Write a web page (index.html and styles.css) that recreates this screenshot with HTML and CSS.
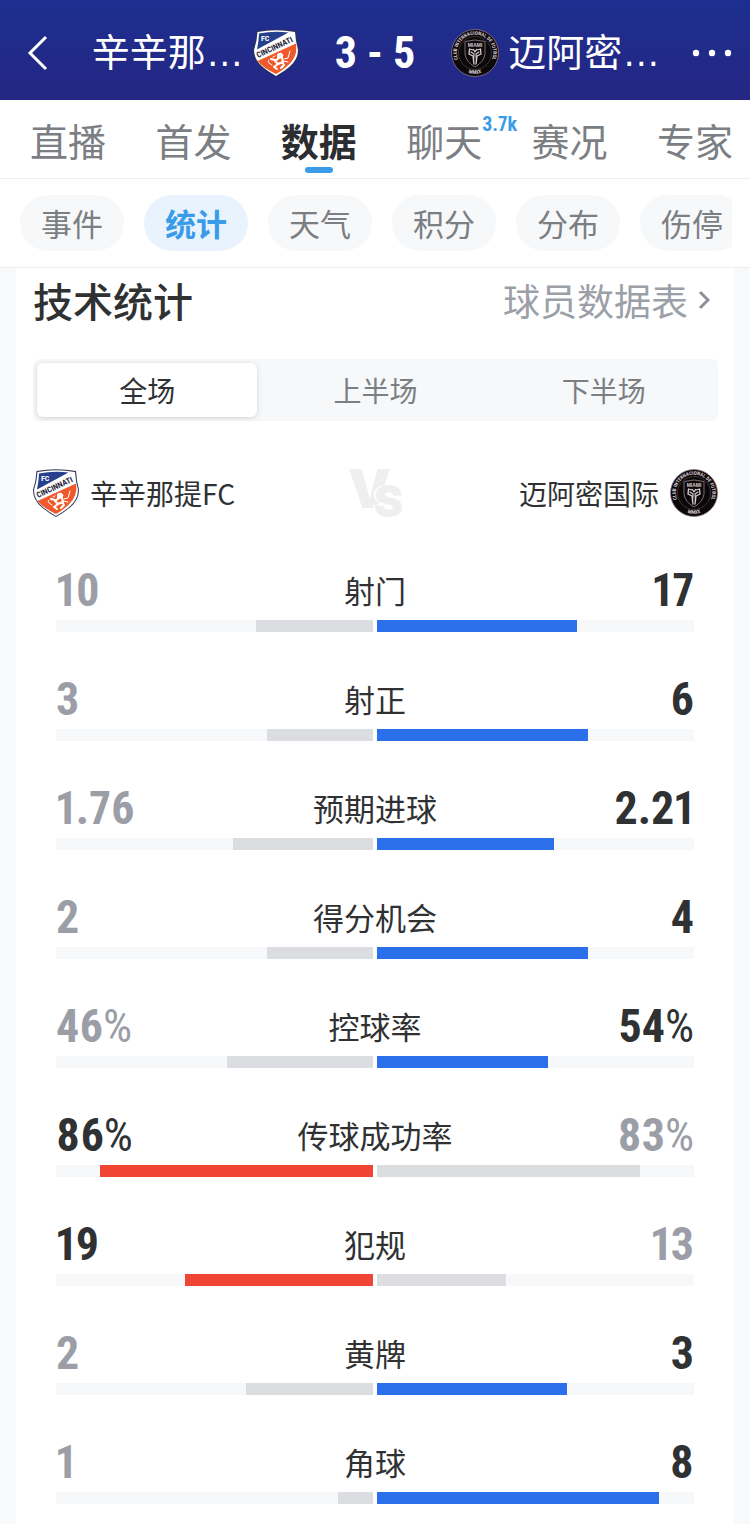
FILE: index.html
```html
<!DOCTYPE html>
<html lang="zh-CN">
<head>
<meta charset="utf-8">
<meta name="viewport" content="width=device-width, initial-scale=1">
<title>技术统计</title>
<link rel="stylesheet" href="styles.css">
</head>
<body>
<header class="match-bar">
  <button class="icon-button" type="button" aria-label="返回">
    <svg class="back-icon" viewBox="0 0 20 36"><path d="M18 2L2 18L18 34"/></svg>
  </button>
  <div class="side side-home">
    <span class="side-name">辛辛那…</span>
    <svg class="crest crest-shield" viewBox="0 0 46 48" role="img" aria-label="辛辛那提FC">
      <g id="cincinnati">
        <path d="M3.500 2Q23-1.500 43 2Q43.500 12 46 21Q46 31 37 38.500Q31 43.500 23 48Q15 43.500 9 38.500Q0 31 0 21Q3 12 3.500 2Z" fill="#2b3350"/>
        <path d="M4.500 3Q23-.5 42 3Q42.500 12 45 21Q45 30.500 36.500 37.700Q31 42.500 23 46.900Q15 42.500 9.500 37.700Q1 30.500 1 21Q4 12 4.500 3Z" fill="#fff"/>
        <path d="M6 4.500Q21 1.500 35.500 3.500L4 20.500Q5.800 12 6 4.500Z" fill="#263f8f"/>
        <path d="M43 14.500L4.500 32Q10 38.800 23 45Q42.500 34 43.300 21Z" fill="#f0592b"/>
        <text x="8" y="12" class="crest-fc">FC</text>
        <text transform="translate(5 29) rotate(-25)" class="crest-name">CINCINNATI</text>
        <g fill="none" stroke="#fff" stroke-linecap="round" stroke-linejoin="round">
          <path d="M25 25L28 24L30 26L29 29L25 29Z" fill="#fff" stroke-width="1"/>
          <path d="M26 29L22 32L25 35L30 33L29 29M22 31L18 30M25 35L21 38L24 40M29 33L31 36L28 39" stroke-width="2"/>
          <path d="M19 36L16 34Q14 32 16 31M31 30L35 29L37 22M30 32L35 33M22 27L20 28" stroke-width="1"/>
        </g>
      </g>
    </svg>
  </div>
  <h1 class="score">3 - 5</h1>
  <div class="side">
    <svg class="crest" viewBox="0 0 48 48" role="img" aria-label="迈阿密国际">
      <g id="miami">
        <circle cx="24" cy="24" r="23.500" fill="#0b0809" stroke="#8b7684" stroke-width=".8"/>
        <circle cx="24" cy="24" r="16.500" fill="none" stroke="#5d4b52" stroke-width=".6"/>
        <path id="ring" d="M9.700 35.200A18.200 18.200 0 1 1 38.300 35.200" fill="none"/>
        <path id="ring-low" d="M14 42.300A20.800 20.800 0 0 0 34 42.300" fill="none"/>
        <text class="ring-text"><textPath href="#ring" startOffset="50%" text-anchor="middle">CLUB INTERNACIONAL DE FUTBOL</textPath></text>
        <text class="ring-text"><textPath href="#ring-low" startOffset="50%" text-anchor="middle">MMXX</textPath></text>
        <path d="M14 12.500Q24 9.500 34 12.500V25Q33 33 24 38Q15 33 14 25Z" fill="#0b0809" stroke="#9b858b" stroke-width=".8"/>
        <text x="24" y="17.500" text-anchor="middle" class="miami-text">MIAMI</text>
        <g fill="none" stroke="#dcced3" stroke-linecap="round" stroke-linejoin="round">
          <path d="M22 21L18.500 20L18 25L22 27L23 35M26 21L29.500 20L30 25L26 27L25 35" stroke-width="1.300"/>
          <path d="M20 23L23 25L22.500 32M28 23L25 25L25.500 32M22.500 20.500L24 23L25.500 20.500" stroke-width="1.200"/>
        </g>
      </g>
    </svg>
    <span class="side-name">迈阿密…</span>
  </div>
  <button class="icon-button" type="button" aria-label="更多">
    <svg class="more-icon" viewBox="0 0 40 8"><circle cx="4" cy="4" r="3.200"/><circle cx="20" cy="4" r="3.200"/><circle cx="36" cy="4" r="3.200"/></svg>
  </button>
</header>

<nav class="tabs">
  <a class="tab" href="#live">直播</a>
  <a class="tab" href="#lineup">首发</a>
  <a class="tab tab-active" href="#data" aria-current="page">数据</a>
  <a class="tab" href="#chat">聊天<span class="badge">3.7k</span></a>
  <a class="tab" href="#match">赛况</a>
  <a class="tab" href="#expert">专家</a>
</nav>

<nav class="pills">
  <div class="pill-track">
    <a class="pill" href="#events">事件</a>
    <a class="pill pill-active" href="#stats" aria-current="true">统计</a>
    <a class="pill" href="#weather">天气</a>
    <a class="pill" href="#points">积分</a>
    <a class="pill" href="#spread">分布</a>
    <a class="pill" href="#injury">伤停</a>
  </div>
</nav>

<main class="card" id="stats">
  <div class="card-head">
    <h2 class="card-title">技术统计</h2>
    <a class="card-link" href="#players">球员数据表<svg class="chevron" viewBox="0 0 12 20"><path d="M2 2L10 10L2 18"/></svg></a>
  </div>

  <div class="segments">
    <button class="segment segment-active" type="button" aria-pressed="true">全场</button>
    <button class="segment" type="button" aria-pressed="false">上半场</button>
    <button class="segment" type="button" aria-pressed="false">下半场</button>
  </div>

  <div class="teams">
    <div class="team"><svg class="crest crest-shield" viewBox="0 0 46 48" aria-hidden="true"><use href="#cincinnati"/></svg><span>辛辛那提FC</span></div>
    <div class="versus"><span class="versus-v">V</span><span class="versus-s">S</span></div>
    <div class="team team-away"><span>迈阿密国际</span><svg class="crest" viewBox="0 0 48 48" aria-hidden="true"><use href="#miami"/></svg></div>
  </div>

  <ul class="stats">
    <li class="stat"><span class="value">10</span><span class="label">射门</span><span class="value lead">17</span><div class="bar bar-home"><div class="fill" style="width:37%"></div></div><div class="bar"><div class="fill fill-away" style="width:63%"></div></div></li>
    <li class="stat"><span class="value">3</span><span class="label">射正</span><span class="value lead">6</span><div class="bar bar-home"><div class="fill" style="width:33.300%"></div></div><div class="bar"><div class="fill fill-away" style="width:66.700%"></div></div></li>
    <li class="stat"><span class="value">1.76</span><span class="label">预期进球</span><span class="value lead">2.21</span><div class="bar bar-home"><div class="fill" style="width:44.300%"></div></div><div class="bar"><div class="fill fill-away" style="width:55.700%"></div></div></li>
    <li class="stat"><span class="value">2</span><span class="label">得分机会</span><span class="value lead">4</span><div class="bar bar-home"><div class="fill" style="width:33.300%"></div></div><div class="bar"><div class="fill fill-away" style="width:66.700%"></div></div></li>
    <li class="stat"><span class="value">46<span class="percent">%</span></span><span class="label">控球率</span><span class="value lead">54<span class="percent">%</span></span><div class="bar bar-home"><div class="fill" style="width:46%"></div></div><div class="bar"><div class="fill fill-away" style="width:54%"></div></div></li>
    <li class="stat"><span class="value lead">86<span class="percent">%</span></span><span class="label">传球成功率</span><span class="value">83<span class="percent">%</span></span><div class="bar bar-home"><div class="fill fill-home" style="width:86%"></div></div><div class="bar"><div class="fill" style="width:83%"></div></div></li>
    <li class="stat"><span class="value lead">19</span><span class="label">犯规</span><span class="value">13</span><div class="bar bar-home"><div class="fill fill-home" style="width:59.400%"></div></div><div class="bar"><div class="fill" style="width:40.600%"></div></div></li>
    <li class="stat"><span class="value">2</span><span class="label">黄牌</span><span class="value lead">3</span><div class="bar bar-home"><div class="fill" style="width:40%"></div></div><div class="bar"><div class="fill fill-away" style="width:60%"></div></div></li>
    <li class="stat"><span class="value">1</span><span class="label">角球</span><span class="value lead">8</span><div class="bar bar-home"><div class="fill" style="width:11.100%"></div></div><div class="bar"><div class="fill fill-away" style="width:88.900%"></div></div></li>
  </ul>
</main>
</body>
</html>
```
FILE: styles.css
```css
* {
  box-sizing: border-box;
}

body {
  margin: 0;
  min-height: 100vh;
  display: flex;
  flex-direction: column;
  background: #f7f9fb;
  color: #303133;
  font-family: "Noto Sans CJK SC", sans-serif;
}

a {
  color: inherit;
  text-decoration: none;
}

button {
  border: 0;
  padding: 0;
  background: none;
  color: inherit;
  font: inherit;
}

.match-bar {
  height: 100px;
  padding: 6px 18px 0;
  display: grid;
  grid-template-columns: 40px 1fr auto 1fr 40px;
  align-items: center;
  background: linear-gradient(#1d2f90, #252683);
  color: #fff;
}

.icon-button {
  display: flex;
  align-items: center;
  justify-content: center;
}

.back-icon {
  width: 24px;
  height: 36px;
  fill: none;
  stroke: #fff;
  stroke-width: 3;
}

.more-icon {
  width: 40px;
  height: 8px;
  fill: #fff;
}

.side {
  display: flex;
  align-items: center;
  gap: 9px;
}

.side-home {
  justify-content: flex-end;
}

.side-name {
  font-family: "Liberation Sans", "Noto Sans CJK SC", sans-serif;
  font-size: 38px;
  line-height: 48px;
}

.score,
.value,
.badge {
  font-family: "Roboto Condensed", "Liberation Sans Narrow", "DejaVu Sans Condensed", sans-serif;
  font-weight: 700;
  font-variant-numeric: proportional-nums;
}

.score {
  margin: 0;
  padding: 0 36px;
  font-size: 44px;
  line-height: 48px;
}

.crest {
  width: 48px;
  height: 48px;
  flex: none;
}

.crest-shield {
  width: 46px;
}

.crest-fc,
.crest-name,
.ring-text {
  font-family: "Roboto Condensed", "Liberation Sans Narrow", sans-serif;
  font-weight: 700;
  font-size: 8px;
}

.crest-fc {
  fill: #fff;
}

.crest-name {
  fill: #1d2438;
}

.ring-text {
  font-size: 5px;
  fill: #d8c8cf;
}

.miami-text {
  font-family: "Liberation Sans", sans-serif;
  font-weight: 700;
  font-size: 5px;
  fill: #d8c8cf;
}

.tabs {
  height: 79px;
  padding: 2px 17px 0 30px;
  display: flex;
  align-items: center;
  justify-content: space-between;
  background: #fff;
  border-bottom: 1px solid #edeef0;
  color: #7b7e82;
  font-size: 38px;
  line-height: 56px;
}

.tab {
  position: relative;
}

.tab-active {
  color: #2c2d30;
  font-weight: 700;
}

.tab-active::after {
  content: "";
  position: absolute;
  left: 50%;
  bottom: -5px;
  width: 28px;
  height: 6px;
  margin-left: -14px;
  border-radius: 3px;
  background: #3a9ce9;
}

.badge {
  position: absolute;
  left: 100%;
  top: 2px;
  color: #3a9ce9;
  font-size: 20px;
  line-height: 20px;
}

.pills {
  padding: 16px 18px 16px 20px;
  background: #fff;
  border-bottom: 1px solid #edeef0;
}

.pill-track {
  display: flex;
  gap: 20px;
  overflow: hidden;
}

.pill {
  flex: none;
  padding: 0 21px;
  border-radius: 29px;
  background: #f7f8fa;
  color: #7b7e82;
  font-size: 31px;
  line-height: 56px;
}

.pill-active {
  background: #e8f3fe;
  color: #3a9ce9;
  font-weight: 700;
}

.card {
  flex: 1;
  margin: 0 16px;
  padding: 0 16px 20px 17px;
  background: #fff;
}

.card-head {
  display: flex;
  align-items: center;
  justify-content: space-between;
  line-height: 64px;
}

.card-title {
  margin: 0;
  font-size: 40px;
  font-weight: 500;
}

.card-link {
  display: flex;
  align-items: center;
  gap: 10px;
  padding-right: 8px;
  color: #9b9fa7;
  font-size: 37px;
}

.chevron {
  width: 12px;
  height: 20px;
  fill: none;
  stroke: #8c9097;
  stroke-width: 3;
}

.segments {
  margin-top: 27px;
  padding: 4px;
  display: grid;
  grid-template-columns: repeat(3, 1fr);
  gap: 8px;
  border-radius: 6px;
  background: #f6f8fa;
}

.segment {
  border-radius: 6px;
  color: #7b7e82;
  font-size: 28px;
  line-height: 54px;
}

.segment-active {
  background: #fff;
  box-shadow: 0 1px 5px rgba(0, 0, 0, 0.16);
  color: #303133;
}

.teams {
  margin-top: 48px;
  display: grid;
  grid-template-columns: 1fr auto 1fr;
  align-items: center;
  font-size: 28px;
  line-height: 48px;
}

.team {
  display: flex;
  align-items: center;
  gap: 11px;
}

.team-away {
  justify-content: flex-end;
}

.versus {
  height: 48px;
  display: flex;
  color: #efeff0;
  font-family: Inter, sans-serif;
  font-weight: 900;
}

.versus-v {
  font-size: 54px;
  line-height: 40px;
}

.versus-s {
  margin-left: -17px;
  padding-top: 16px;
  font-size: 44px;
  line-height: 32px;
  text-shadow: -2px 0 #fff;
}

.stats {
  margin: 47px 0 0;
  padding: 0 24px 0 23px;
  display: grid;
  gap: 41px;
  list-style: none;
}

.stat {
  display: grid;
  grid-template-columns: repeat(2, 1fr);
  gap: 4px;
}

.value,
.label {
  grid-row: 1;
  line-height: 52px;
}

.value {
  grid-column: 1;
  color: #9b9ea7;
  font-size: 46px;
}

.label {
  grid-column: 1 / -1;
  justify-self: center;
  font-size: 31px;
}

.label + .value {
  grid-column: 2;
  justify-self: end;
}

.value.lead {
  color: #303133;
}

.percent {
  font-weight: 400;
}

.bar {
  grid-row: 2;
  height: 12px;
  display: flex;
  background: #f7f8f9;
}

.bar-home {
  justify-content: flex-end;
}

.fill {
  background: #dcdde0;
}

.fill-home {
  background: #f04535;
}

.fill-away {
  background: #2b70ea;
}
```
